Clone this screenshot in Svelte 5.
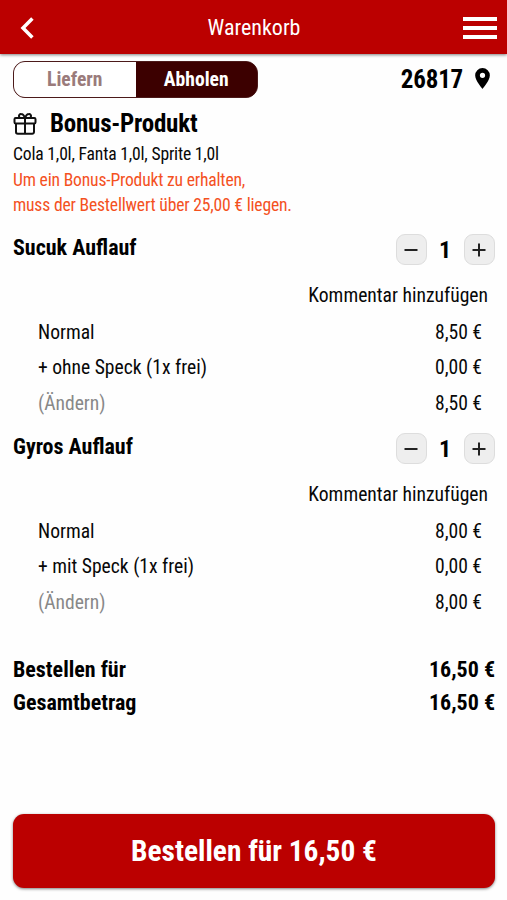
<script>
  let mode = $state("Abholen");

  let items = $state([
    { name: "Sucuk Auflauf", count: 1, price: 8.5, extra: "+ ohne Speck (1x frei)" },
    { name: "Gyros Auflauf", count: 1, price: 8, extra: "+ mit Speck (1x frei)" }
  ]);

  let total = $derived(items.reduce((sum, item) => sum + item.count * item.price, 0));

  const euro = (value) => value.toFixed(2).replace(".", ",") + " €";
</script>

<div class="page">
  <header class="header">
    <svg class="back" viewBox="0 0 14 22" aria-hidden="true">
      <path d="M12.400 1.500 3 11l9.400 9.500" />
    </svg>
    <h1>Warenkorb</h1>
    <div class="burger"><i></i><i></i><i></i></div>
  </header>

  <main>
    <div class="top">
      <div class="toggle">
        {#each ["Liefern", "Abholen"] as name}
          <button class:active={mode === name} onclick={() => (mode = name)}>{name}</button>
        {/each}
      </div>
      <div class="place">
        <span>26817</span>
        <svg viewBox="0 0 14 20" aria-hidden="true">
          <path fill-rule="evenodd" d="M7 0a7 7 0 0 0-7 7c0 5.200 7 13 7 13s7-7.800 7-13a7 7 0 0 0-7-7zm0 4.500a2.500 2.500 0 1 1 0 5 2.500 2.500 0 0 1 0-5z" />
        </svg>
      </div>
    </div>

    <section class="bonus">
      <h2>
        <svg viewBox="0 0 24 22" aria-hidden="true">
          <rect x="1.500" y="5" width="21" height="5.500" rx="1.200" />
          <path d="M3 10.500V19a1.800 1.800 0 0 0 1.800 1.800h14.400A1.800 1.800 0 0 0 21 19v-8.500M12 5v15.500M12 5C11 2 9.500 1 8.200 1a2 2 0 0 0-1.500 3.500M12 5c1-3 2.500-4 3.800-4a2 2 0 0 1 1.500 3.500" />
        </svg>
        <span>Bonus-Produkt</span>
      </h2>
      <p>Cola 1,0l, Fanta 1,0l, Sprite 1,0l</p>
      <p class="hint">Um ein Bonus-Produkt zu erhalten,<br />muss der Bestellwert über 25,00 € liegen.</p>
    </section>

    {#each items as item}
      <section class="item">
        <div class="item-head">
          <h3>{item.name}</h3>
          <div class="stepper">
            <button aria-label="weniger" onclick={() => item.count > 1 && item.count--}>
              <svg viewBox="0 0 14 14" aria-hidden="true"><path d="M.5 7h13" /></svg>
            </button>
            <b>{item.count}</b>
            <button aria-label="mehr" onclick={() => item.count++}>
              <svg viewBox="0 0 14 14" aria-hidden="true"><path d="M.5 7h13M7 .5v13" /></svg>
            </button>
          </div>
        </div>
        <div class="comment">Kommentar hinzufügen</div>
        <div class="row"><span>Normal</span><span>{euro(item.price)}</span></div>
        <div class="row"><span>{item.extra}</span><span>{euro(0)}</span></div>
        <div class="row"><span class="change">(Ändern)</span><span>{euro(item.count * item.price)}</span></div>
      </section>
    {/each}

    <section class="totals">
      <div><span>Bestellen für</span><span>{euro(total)}</span></div>
      <div><span>Gesamtbetrag</span><span>{euro(total)}</span></div>
    </section>
  </main>

  <footer>
    <button class="order">Bestellen für {euro(total)}</button>
  </footer>
</div>

<style>
  :global(body) {
    margin: 0;
    background: #fefefe;
  }

  .page {
    display: flex;
    flex-direction: column;
    height: 900px;
    font-family: "Roboto Condensed", Roboto, sans-serif;
    font-stretch: 75%;
    font-size: 19.6px;
    color: #080808;
  }

  h1, h2, h3, p {
    margin: 0;
  }

  button {
    font: inherit;
    padding: 0;
    cursor: pointer;
  }

  .header {
    display: grid;
    grid-template-columns: 60px 1fr 60px;
    align-items: center;
    height: 54px;
    background: #bb0000;
    color: #fff;
    box-shadow: 0 1px 3px rgba(0, 0, 0, 0.5);
  }

  .back {
    width: 14px;
    height: 22px;
    margin: 2px 0 0 20px;
    fill: none;
    stroke: #fff;
    stroke-width: 3.5;
  }

  h1 {
    padding-left: 1px;
    font-size: 22px;
    font-weight: 400;
    text-align: center;
  }

  .burger {
    display: flex;
    flex-direction: column;
    gap: 5px;
    width: 34px;
    margin: 2px 0 0 16px;
  }

  .burger i {
    height: 4px;
    background: #fff;
  }

  main {
    flex: 1;
    padding: 7px 12px 0 13px;
  }

  .top {
    display: flex;
    justify-content: space-between;
    align-items: center;
    height: 36px;
  }

  .toggle {
    display: flex;
    box-sizing: border-box;
    width: 245px;
    height: 37px;
    border: 1px solid #4c1a1a;
    border-radius: 12px;
    overflow: hidden;
    background: #3c0000;
  }

  .toggle button {
    flex: 1;
    border: 0;
    background: #fff;
    color: #9a7b7b;
    font-weight: 700;
  }

  .toggle .active {
    background: #3c0000;
    color: #fff;
  }

  .place {
    display: flex;
    align-items: center;
    gap: 12px;
    padding: 2px 5px 0 0;
    font-size: 25px;
    font-weight: 700;
    letter-spacing: -0.2px;
    line-height: 34px;
    color: #000;
  }

  .place svg {
    width: 15px;
    height: 21px;
    margin-bottom: 3px;
  }

  .bonus {
    height: 115px;
    font-size: 17.6px;
    line-height: 25.6px;
    letter-spacing: -0.19px;
  }

  .bonus h2 {
    display: flex;
    align-items: center;
    gap: 13px;
    height: 37px;
    padding-top: 8px;
    font-size: 25px;
    letter-spacing: -0.22px;
    color: #000;
  }

  .bonus svg {
    width: 24px;
    height: 22px;
    fill: none;
    stroke: #111;
    stroke-width: 2;
  }

  .hint {
    color: #f4511e;
  }

  .item {
    height: 199px;
  }

  .item-head {
    display: flex;
    justify-content: space-between;
    height: 68px;
    padding-top: 22px;
    box-sizing: border-box;
  }

  h3 {
    font-size: 22px;
    line-height: 28px;
    color: #000;
  }

  .stepper {
    display: flex;
    align-items: center;
    height: 31px;
    padding-right: 0.5px;
  }

  .stepper button {
    display: flex;
    align-items: center;
    justify-content: center;
    box-sizing: border-box;
    width: 31px;
    height: 31px;
    border: 1px solid #ddd;
    border-radius: 9px;
    background: #eee;
  }

  .stepper svg {
    width: 14px;
    height: 14px;
    fill: none;
    stroke: #222;
    stroke-width: 2;
  }

  .stepper b {
    width: 37px;
    font-size: 24px;
    text-align: center;
    color: #000;
  }

  .comment {
    height: 35px;
    line-height: 32px;
    padding-right: 7px;
    text-align: right;
  }

  .row {
    display: flex;
    justify-content: space-between;
    padding: 0 13px 0 25px;
    line-height: 35.4px;
  }

  .change {
    color: #888;
  }

  .totals {
    padding-top: 43px;
    font-size: 22px;
    font-weight: 700;
    line-height: 33px;
    color: #000;
  }

  .totals div {
    display: flex;
    justify-content: space-between;
  }

  footer {
    padding: 0 12px 12px 13px;
  }

  .order {
    display: block;
    width: 100%;
    height: 74px;
    border: 0;
    border-radius: 11px;
    background: #bb0000;
    color: #fff;
    font-size: 29.4px;
    font-weight: 700;
    box-shadow: 0 1px 3px rgba(0, 0, 0, 0.5);
  }
</style>
